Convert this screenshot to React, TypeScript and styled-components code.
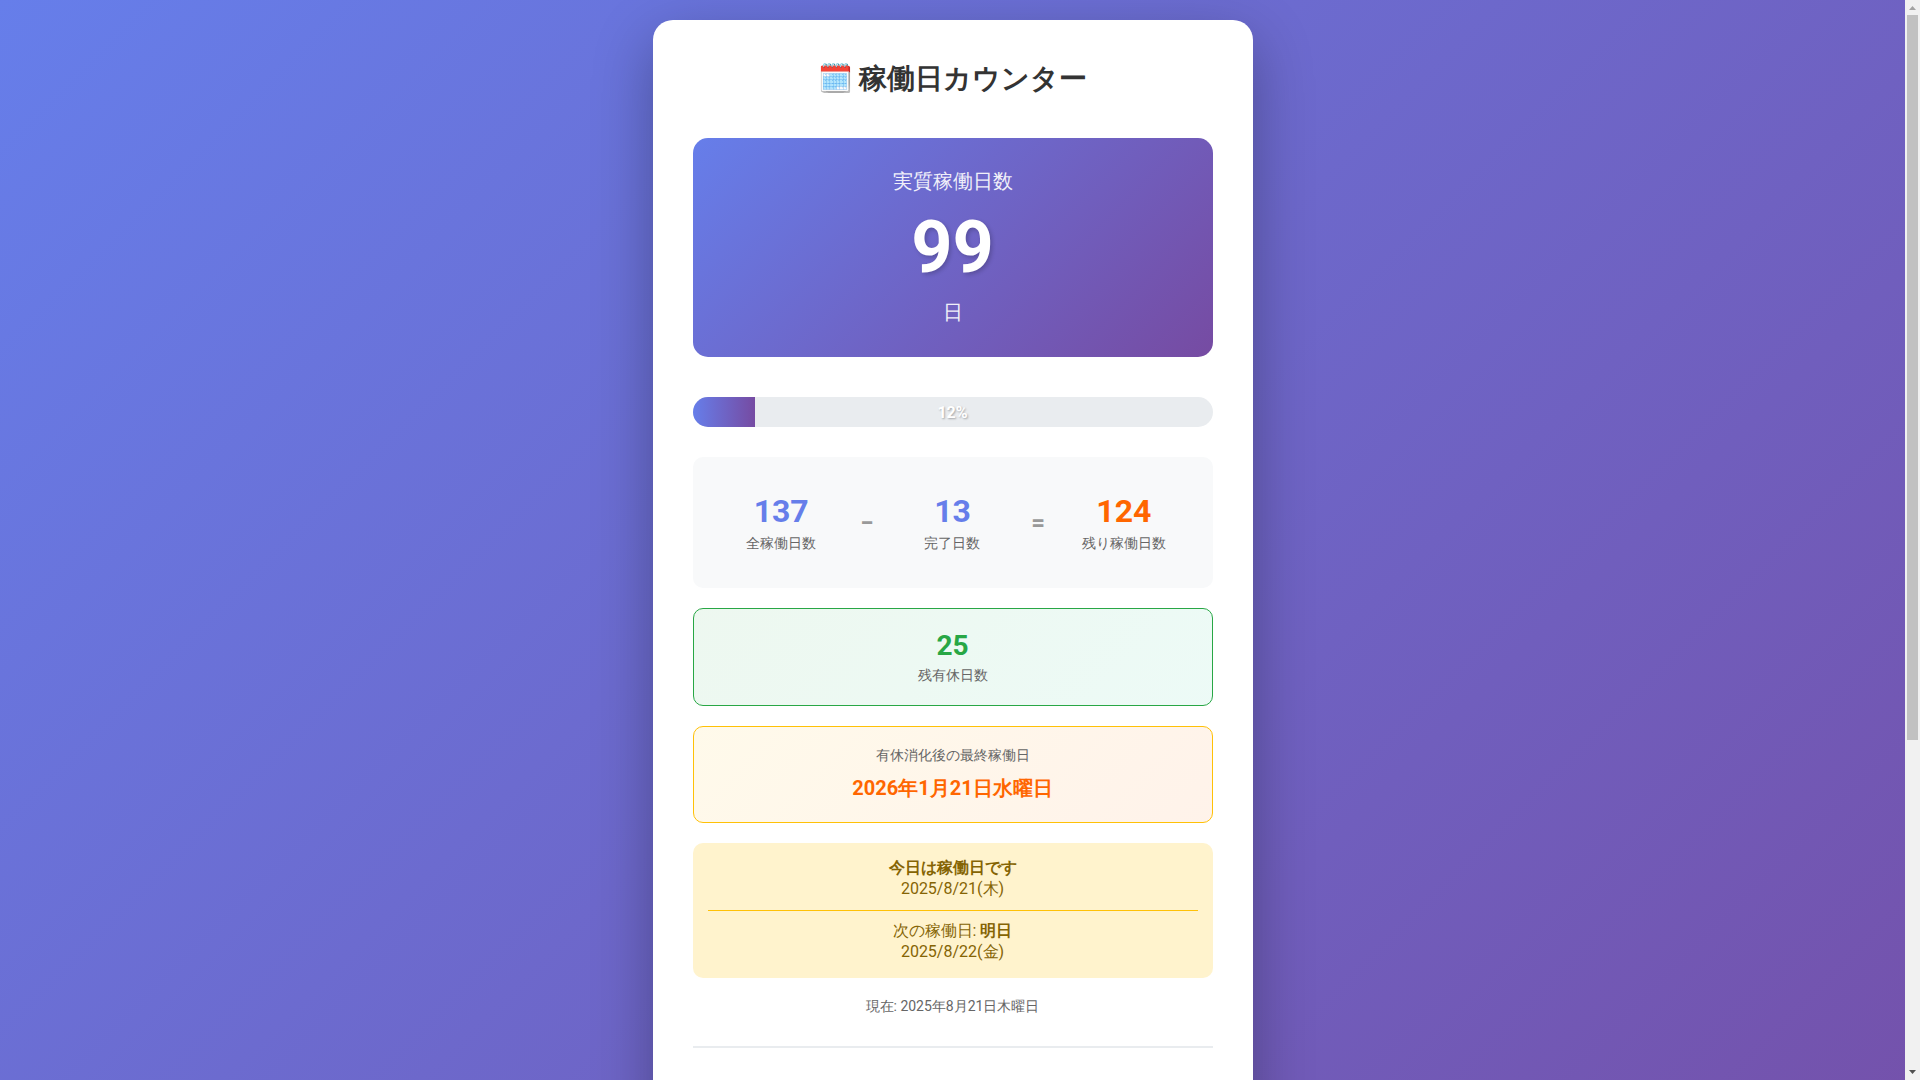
import React from "react";
import styled, { createGlobalStyle } from "styled-components";

const GlobalStyle = createGlobalStyle`
  * { box-sizing: border-box; margin: 0; padding: 0; }
  body {
    font-family: Roboto, sans-serif;
    color: #333;
  }
`;

const Shell = styled.div`
  display: flex;
  height: 100vh;
  overflow: hidden;
`;

const Viewport = styled.div`
  flex: 1;
  overflow-y: auto;
  scrollbar-width: none;
`;

const Page = styled.div`
  min-height: 100vh;
  padding: 20px;
  background: linear-gradient(135deg, #667eea 0%, #764ba2 100%);
`;

const Scrollbar = styled.div`
  display: grid;
  grid-template-rows: 15px 1fr 15px;
  justify-items: center;
  width: 15px;
  background: #f1f1f1;
`;

const Thumb = styled.div`
  width: 11px;
  height: 69%;
  background: #c1c1c1;
`;

const Arrow = styled.svg`
  width: 15px;
  height: 15px;
`;

const Card = styled.main`
  max-width: 600px;
  margin: 0 auto;
  padding: 40px;
  border-radius: 20px;
  background: #fff;
  box-shadow: 0 20px 60px rgba(0, 0, 0, 0.3);
  text-align: center;
`;

const Title = styled.h1`
  margin-bottom: 40px;
  font-size: 28px;
  line-height: 38px;
`;

const Hero = styled.section`
  padding: 30px;
  margin-bottom: 40px;
  border-radius: 15px;
  background: linear-gradient(135deg, #667eea 0%, #764ba2 100%);
  color: #fff;
`;

const HeroText = styled.p`
  font-size: 20px;
  line-height: 26px;
  padding-bottom: 2px;
  opacity: 0.9;
`;

const HeroNumber = styled.p`
  margin: 10px 0;
  font-size: 72px;
  line-height: 83px;
  font-weight: bold;
  text-shadow: 2px 2px 4px rgba(0, 0, 0, 0.2);
`;

const Progress = styled.div`
  display: grid;
  align-items: center;
  height: 30px;
  margin-bottom: 30px;
  border-radius: 15px;
  overflow: hidden;
  background: #e9ecef;
`;

const ProgressFill = styled.div`
  grid-area: 1 / 1;
  height: 30px;
  background: linear-gradient(90deg, #667eea, #764ba2);
`;

const ProgressLabel = styled.span`
  grid-area: 1 / 1;
  font-size: 16px;
  font-weight: bold;
  color: #fff;
  text-shadow: 1px 1px 2px rgba(0, 0, 0, 0.3);
`;

const Formula = styled.section`
  display: flex;
  align-items: center;
  padding: 35px 20px;
  margin-bottom: 20px;
  border-radius: 10px;
  background: #f8f9fa;
`;

const FormulaItem = styled.div`
  flex: 1;
`;

const Operator = styled.span`
  width: 34px;
  font-size: 24px;
  line-height: 28px;
  font-weight: bold;
  color: #999;
`;

const Value = styled.p<{ $size: number; $line: number; $color: string }>`
  font-size: ${(p) => p.$size}px;
  line-height: ${(p) => p.$line}px;
  font-weight: bold;
  color: ${(p) => p.$color};
`;

const Caption = styled.p`
  margin-top: 4px;
  font-size: 14px;
  line-height: 19px;
  color: #666;
`;

const Panel = styled.section<{ $border: string; $from: string; $to: string }>`
  padding: 20px;
  margin-bottom: 20px;
  border: 1px solid ${(p) => p.$border};
  border-radius: 10px;
  background: linear-gradient(135deg, ${(p) => p.$from}, ${(p) => p.$to});
`;

const FinalLabel = styled(Caption)`
  margin: 0 0 10px;
  line-height: 17px;
`;

const Notice = styled.section`
  padding: 14px 15px 16px;
  margin-bottom: 20px;
  border-radius: 10px;
  background: #fff3cd;
  font-size: 16px;
  line-height: 21px;
  color: #856404;
`;

const NoticeNext = styled.div`
  margin-top: 11px;
  padding-top: 9px;
  border-top: 1px solid #ffc107;
`;

const Now = styled.p`
  font-size: 14px;
  line-height: 16px;
  color: #666;
`;

const Settings = styled.section`
  min-height: 462px;
  margin-top: 32px;
  border-top: 2px solid #e9ecef;
`;

const total = 137;
const done = 13;
const percent = 12;

export default function App() {
  return (
    <>
      <GlobalStyle />
      <Shell lang="ja">
        <Viewport>
          <Page>
            <Card>
              <Title>🗓️ 稼働日カウンター</Title>
              <Hero>
                <HeroText>実質稼働日数</HeroText>
                <HeroNumber>99</HeroNumber>
                <HeroText>日</HeroText>
              </Hero>
              <Progress role="progressbar" aria-valuenow={percent} aria-valuemin={0} aria-valuemax={100}>
                <ProgressFill style={{ width: `${percent}%` }} />
                <ProgressLabel>{percent}%</ProgressLabel>
              </Progress>
              <Formula>
                <FormulaItem>
                  <Value $size={32} $line={38} $color="#667eea">{total}</Value>
                  <Caption>全稼働日数</Caption>
                </FormulaItem>
                <Operator>−</Operator>
                <FormulaItem>
                  <Value $size={32} $line={38} $color="#667eea">{done}</Value>
                  <Caption>完了日数</Caption>
                </FormulaItem>
                <Operator>=</Operator>
                <FormulaItem>
                  <Value $size={32} $line={38} $color="#ff6600">{total - done}</Value>
                  <Caption>残り稼働日数</Caption>
                </FormulaItem>
              </Formula>
              <Panel $border="#28a745" $from="#28a74515" $to="#20c99715">
                <Value $size={28} $line={33} $color="#28a745">25</Value>
                <Caption>残有休日数</Caption>
              </Panel>
              <Panel $border="#ffc107" $from="#ffc10715" $to="#ff660015">
                <FinalLabel>有休消化後の最終稼働日</FinalLabel>
                <Value $size={20} $line={28} $color="#ff6600">2026年1月21日水曜日</Value>
              </Panel>
              <Notice>
                <p><strong>今日は稼働日です</strong></p>
                <p>2025/8/21(木)</p>
                <NoticeNext>
                  <p>次の稼働日: <strong>明日</strong></p>
                  <p>2025/8/22(金)</p>
                </NoticeNext>
              </Notice>
              <Now>現在: 2025年8月21日木曜日</Now>
              <Settings aria-label="設定" />
            </Card>
          </Page>
        </Viewport>
        <Scrollbar aria-hidden="true">
          <Arrow viewBox="0 0 15 15"><path d="M4 10h7L7.5 6z" fill="#a3a3a3" /></Arrow>
          <Thumb />
          <Arrow viewBox="0 0 15 15"><path d="M4 5h7L7.5 9z" fill="#505050" /></Arrow>
        </Scrollbar>
      </Shell>
    </>
  );
}
